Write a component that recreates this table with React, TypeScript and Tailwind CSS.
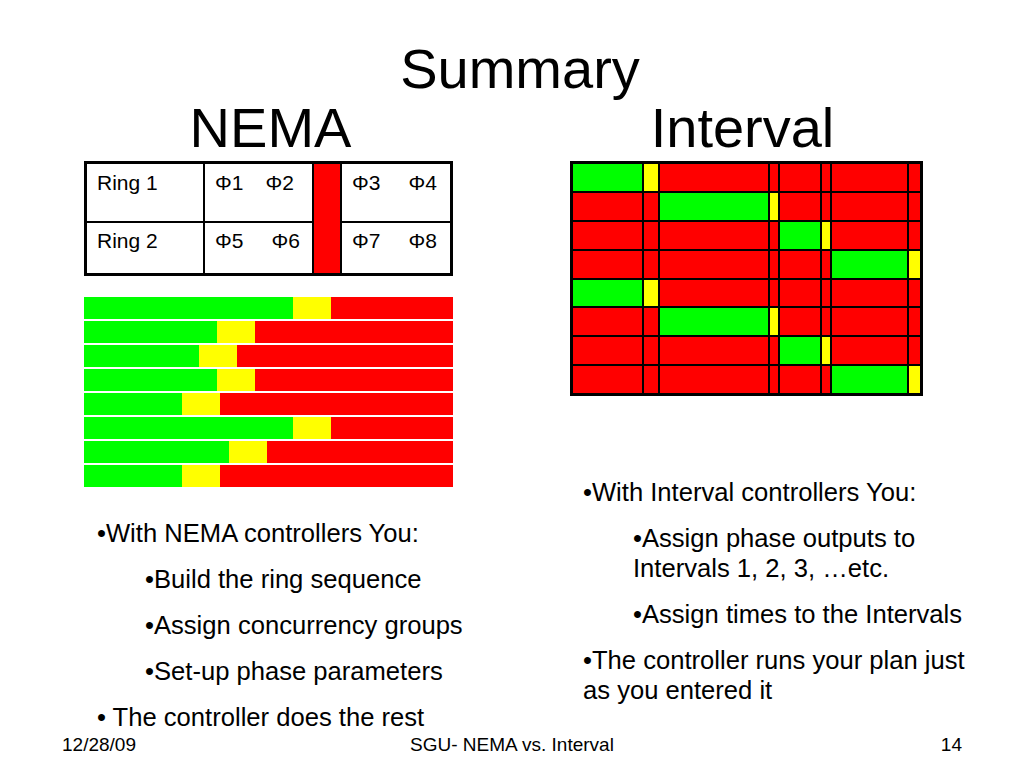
import React from 'react';

// green width per NEMA bar (px); yellow is fixed, red takes the rest
const nemaBars = [209, 133, 115, 133, 98, 209, 145, 98];

const intervalRows = [0, 1, 2, 3, 0, 1, 2, 3];

function cellColor(row: number, col: number) {
  if (col === row * 2) return 'bg-[#00ff00]';
  if (col === row * 2 + 1) return 'bg-[#ffff00]';
  return 'bg-[#ff0000]';
}

export default function App() {
  return (
    <div className="w-[1024px] h-[768px] bg-white text-black flex flex-col pt-[41px] font-['Liberation_Sans',Arial,sans-serif]">
      {/* Title */}
      <h1 className="text-[56px] leading-none text-center pl-[16px]">Summary</h1>

      <div className="flex mt-[3px] pl-[84px] gap-[117px]">
        {/* NEMA column */}
        <div className="w-[369px] flex flex-col">
          <h2 className="text-[56px] leading-none text-center pl-[4px]">NEMA</h2>

          <div className="mt-[5px] grid grid-cols-[116px_107px_26px_108px] grid-rows-[57px_50px] gap-[2px] border-[3px] border-black bg-black text-[21px] leading-[24px]">
            <div className="bg-white pl-[10px] pt-[7px]">Ring 1</div>
            <div className="bg-white pl-[10px] pt-[7px]">
              <span>Φ1</span>
              <span className="ml-[22px]">Φ2</span>
            </div>
            <div className="row-span-2 bg-[#ff0000]"></div>
            <div className="bg-white pl-[10px] pt-[7px]">
              <span>Φ3</span>
              <span className="ml-[28px]">Φ4</span>
            </div>
            <div className="bg-white pl-[10px] pt-[6px]">Ring 2</div>
            <div className="bg-white pl-[10px] pt-[6px]">
              <span>Φ5</span>
              <span className="ml-[28px]">Φ6</span>
            </div>
            <div className="bg-white pl-[10px] pt-[6px]">
              <span>Φ7</span>
              <span className="ml-[28px]">Φ8</span>
            </div>
          </div>

          <div className="mt-[21px] flex flex-col gap-[2px]">
            {nemaBars.map((g, i) => (
              <div key={i} className="flex h-[22px]">
                <div className="bg-[#00ff00]" style={{ width: g }}></div>
                <div className="w-[38px] bg-[#ffff00]"></div>
                <div className="flex-1 bg-[#ff0000]"></div>
              </div>
            ))}
          </div>

          <div className="mt-[31px] ml-[13px] text-[25.6px] leading-[30px] whitespace-nowrap">
            <p className="mb-[16px]">•With NEMA controllers You:</p>
            <p className="mb-[16px] pl-[48px]">•Build the ring sequence</p>
            <p className="mb-[16px] pl-[48px]">•Assign concurrency groups</p>
            <p className="mb-[16px] pl-[48px]">•Set-up phase parameters</p>
            <p>• The controller does the rest</p>
          </div>
        </div>

        {/* Interval column */}
        <div className="w-[353px] flex flex-col">
          <h2 className="text-[56px] leading-none text-center pr-[8px]">Interval</h2>

          <div className="mt-[5px] h-[235px] grid grid-cols-[69px_14px_108px_8px_40px_8px_75px_11px] grid-rows-[repeat(8,minmax(0,1fr))] gap-[2px] border-[3px] border-black bg-black">
            {intervalRows.map((r, ri) =>
              [0, 1, 2, 3, 4, 5, 6, 7].map((c) => (
                <div key={`${ri}-${c}`} className={cellColor(r, c)}></div>
              ))
            )}
          </div>

          <div className="mt-[81px] ml-[13px] w-[390px] text-[25.6px] leading-[30px]">
            <p className="mb-[16px]">•With Interval controllers You:</p>
            <p className="mb-[16px] pl-[50px]">•Assign phase outputs to Intervals 1, 2, 3, …etc.</p>
            <p className="mb-[16px] pl-[50px]">•Assign times to the Intervals</p>
            <p>•The controller runs your plan just as you entered it</p>
          </div>
        </div>
      </div>

      {/* Footer */}
      <div className="mt-auto mb-[14px] grid grid-cols-3 text-[19px] leading-none">
        <div className="pl-[62px]">12/28/09</div>
        <div className="text-center">SGU- NEMA vs. Interval</div>
        <div className="text-right pr-[62px]">14</div>
      </div>
    </div>
  );
}
